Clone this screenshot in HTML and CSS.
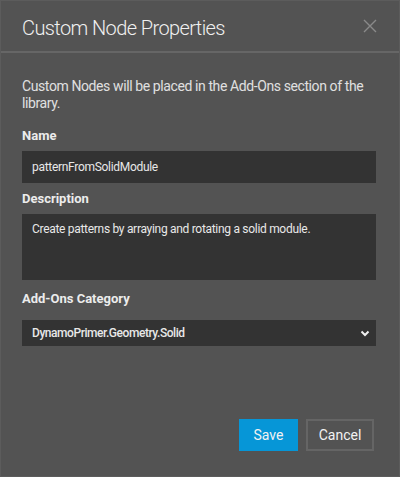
FILE: index.html
```html
<!DOCTYPE html>
<html>
<head>
<meta charset="utf-8">
<link rel="stylesheet" href="styles.css">
</head>
<body>
<div class="dialog">
  <div class="header">
    <div class="title">Custom Node Properties</div>
    <svg class="close" width="14" height="14" viewBox="0 0 14 14"><path d="M1 1L13 13M13 1L1 13" stroke="#8a8a8a" stroke-width="1.4" fill="none"/></svg>
  </div>
  <div class="body">
    <p class="intro">Custom Nodes will be placed in the Add-Ons section of the library.</p>
    <div class="label first">Name</div>
    <div class="field input">patternFromSolidModule</div>
    <div class="label">Description</div>
    <div class="field textarea">Create patterns by arraying and rotating a solid module.</div>
    <div class="label">Add-Ons Category</div>
    <div class="field select"><span>DynamoPrimer.Geometry.Solid</span>
      <svg width="10" height="7" viewBox="0 0 10 7"><path d="M1.5 1.5L5 5L8.5 1.5" stroke="#f0f0f0" stroke-width="2" fill="none"/></svg>
    </div>
  </div>
  <div class="footer">
    <button class="btn save">Save</button>
    <button class="btn cancel">Cancel</button>
  </div>
</div>
</body>
</html>
```
FILE: styles.css
```css
html, body { margin: 0; padding: 0; background: #535353; }
body { font-family: Roboto, "Noto Sans", sans-serif; color: #e6e6e6; }
.dialog { width: 400px; height: 477px; box-sizing: border-box; border: 1px solid #5c5c5c; background: #535353; display: flex; flex-direction: column; }
.header { height: 50px; display: flex; align-items: center; justify-content: space-between; padding: 0 21px 0 21px; border-bottom: 2px solid #666666; }
.title { font-size: 20px; font-weight: 300; color: #f0f0f0; letter-spacing: -0.6px; padding-top: 3px; }
.close { margin-right: 1px; }
.body { padding: 25px 23px 0 21px; display: flex; flex-direction: column; }
.intro { margin: 0; font-size: 14px; line-height: 17px; color: #e0e0e0; letter-spacing: -0.4px; }
.label { font-size: 13px; font-weight: 700; color: #ececec; height: 18px; line-height: 18px; margin-top: 7px; }
.label.first { margin-top: 15px; }
.field { background: #333333; color: #e8e8e8; font-size: 12px; margin-top: 6px; padding: 0 10px; box-sizing: border-box; letter-spacing: -0.3px; }
.input { height: 32px; line-height: 32px; }
.textarea { height: 66px; padding-top: 6px; line-height: 18px; }
.select { height: 26px; display: flex; align-items: center; justify-content: space-between; margin-top: 12px; padding-right: 6px; font-weight: 500; letter-spacing: -0.45px; }
.textarea + .label { margin-top: 10px; }
.footer { margin-top: auto; padding: 0 25px 25px 0; display: flex; justify-content: flex-end; gap: 8px; }
.btn { font-family: inherit; font-size: 14px; height: 32px; box-sizing: border-box; padding: 0; color: #f2f2f2; cursor: pointer; }
.save { width: 59px; background: #0696d7; border: none; }
.cancel { width: 68px; background: transparent; border: 2px solid #656565; }
```
